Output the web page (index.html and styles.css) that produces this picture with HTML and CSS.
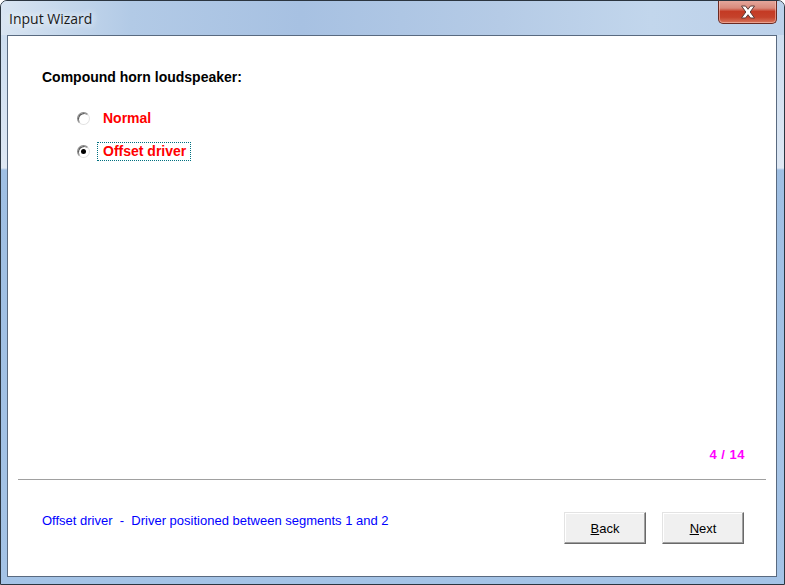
FILE: index.html
```html
<!DOCTYPE html>
<html lang="en">
<head>
<meta charset="UTF-8">
<title>Input Wizard</title>
<link rel="stylesheet" href="styles.css">
</head>
<body>

<div class="window">
    <div class="titlebar">
        <span class="title">Input Wizard</span>
        <div class="close-btn">
            <svg width="16" height="14" viewBox="0 0 16 14">
                <path d="M1.5 1 L5.5 1 L8 4.3 L10.5 1 L14.5 1 L10.2 7 L14.5 13 L10.5 13 L8 9.7 L5.5 13 L1.5 13 L5.8 7 Z" fill="#fff" stroke="#5a3a36" stroke-width="1" stroke-linejoin="round"/>
            </svg>
        </div>
    </div>

    <div class="client">
        <div class="main">
            <div class="question">Compound horn loudspeaker:</div>
            <div class="options">
                <div class="option">
                    <span class="radio"></span>
                    <span class="option-label">Normal</span>
                </div>
                <div class="option">
                    <span class="radio checked"></span>
                    <span class="option-label focused">Offset driver</span>
                </div>
            </div>
            <div class="page-count">4 / 14</div>
        </div>
        <div class="divider"></div>
        <div class="footer">
            <div class="hint">Offset driver  -  Driver positioned between segments 1 and 2</div>
            <div class="buttons">
                <button class="btn"><u>B</u>ack</button>
                <button class="btn"><u>N</u>ext</button>
            </div>
        </div>
    </div>
</div>

</body>
</html>
```

FILE: styles.css
```css
body {
    margin: 0;
    font-family: "Liberation Sans", Arial, sans-serif;
    background: #fff;
}
.window {
    width: 785px;
    height: 585px;
    box-sizing: border-box;
    border: 1px solid #2b3540;
    border-radius: 7px 7px 0 0;
    display: flex;
    flex-direction: column;
    background: linear-gradient(to bottom, #c9dbef 0, #dbe6f3 150px, #dfe8f3 167px, #9fbfe3 169px, #a4c3e6 100%);
    overflow: hidden;
}
.titlebar {
    height: 34px;
    flex: none;
    display: flex;
    align-items: flex-start;
    justify-content: space-between;
    background: linear-gradient(to right, #d9e5f2 0, #c6d8ec 60px, #b2cae6 130px, #a7c1e2 300px, #b5cbe6 500px, #c2d6ec 650px, #bcd1ea 100%);
}
.title {
    font-family: "Segoe UI", "Open Sans", sans-serif;
    font-size: 14px;
    color: #1a1a1a;
    margin: 8px 0 0 8px;
    text-shadow: 0 0 6px #eef4fb, 0 0 10px #eef4fb;
}
.close-btn {
    width: 57px;
    height: 23px;
    margin-right: 7px;
    margin-top: -1px;
    border: 1px solid #6b2a22;
    border-top: none;
    border-radius: 0 0 5px 5px;
    background: linear-gradient(to bottom, #e6aa9f 0, #d98a7c 35%, #c43a24 50%, #c5422b 75%, #d8765d 100%);
    box-shadow: inset 0 0 0 1px rgba(255, 210, 200, 0.5);
    display: flex;
    align-items: center;
    justify-content: center;
}
.client {
    flex: none;
    height: 542px;
    margin: 0 7px 0 6px;
    box-sizing: border-box;
    border: 1px solid #596a80;
    background: #fff;
    display: flex;
    flex-direction: column;
}
.main {
    flex: 1;
    display: flex;
    flex-direction: column;
    padding: 33px 31px 17px 34px;
}
.question {
    font-size: 14px;
    font-weight: bold;
    line-height: 17px;
    color: #000;
}
.options {
    margin-top: 22px;
    padding-left: 35px;
    display: flex;
    flex-direction: column;
    gap: 12px;
}
.option {
    display: flex;
    align-items: center;
    height: 21px;
}
.radio {
    width: 13px;
    height: 13px;
    box-sizing: border-box;
    border-radius: 50%;
    border: 1px solid;
    border-color: #8a8a8a #e2e2e2 #e2e2e2 #8a8a8a;
    box-shadow: inset 1px 1px 0 #5a5a5a;
    background: #fff;
    position: relative;
}
.radio.checked::after {
    content: "";
    position: absolute;
    left: 3px;
    top: 3px;
    width: 5px;
    height: 5px;
    border-radius: 50%;
    background: #000;
}
.option-label {
    margin-left: 7px;
    padding: 1px 4px 1px 5px;
    border: 1px solid transparent;
    font-size: 14px;
    font-weight: bold;
    color: #ff0000;
    line-height: 15px;
}
.option-label.focused {
    border: 1px dotted #007080;
}
.page-count {
    margin-top: auto;
    align-self: flex-end;
    font-size: 13px;
    font-weight: bold;
    color: #ff00ff;
    line-height: 15px;
    letter-spacing: 0.5px;
}
.divider {
    height: 1px;
    margin: 0 10px 0 10px;
    background: #a0a0a0;
    border-bottom: 1px solid #fff;
}
.footer {
    flex: none;
    height: 95px;
    box-sizing: border-box;
    display: flex;
    justify-content: space-between;
    align-items: flex-start;
    padding: 31px 32px 0 34px;
}
.hint {
    font-size: 13px;
    color: #0000ff;
    margin-top: 1px;
    white-space: pre;
}
.buttons {
    display: flex;
    gap: 16px;
}
.btn {
    width: 82px;
    height: 32px;
    box-sizing: border-box;
    font-family: "Liberation Sans", Arial, sans-serif;
    font-size: 13px;
    color: #000;
    background: #f0f0f0;
    border: 1px solid;
    border-color: #e3e3e3 #696969 #696969 #e3e3e3;
    box-shadow: inset -1px -1px 0 #a0a0a0, inset 1px 1px 0 #fff;
    padding: 0;
}
```
